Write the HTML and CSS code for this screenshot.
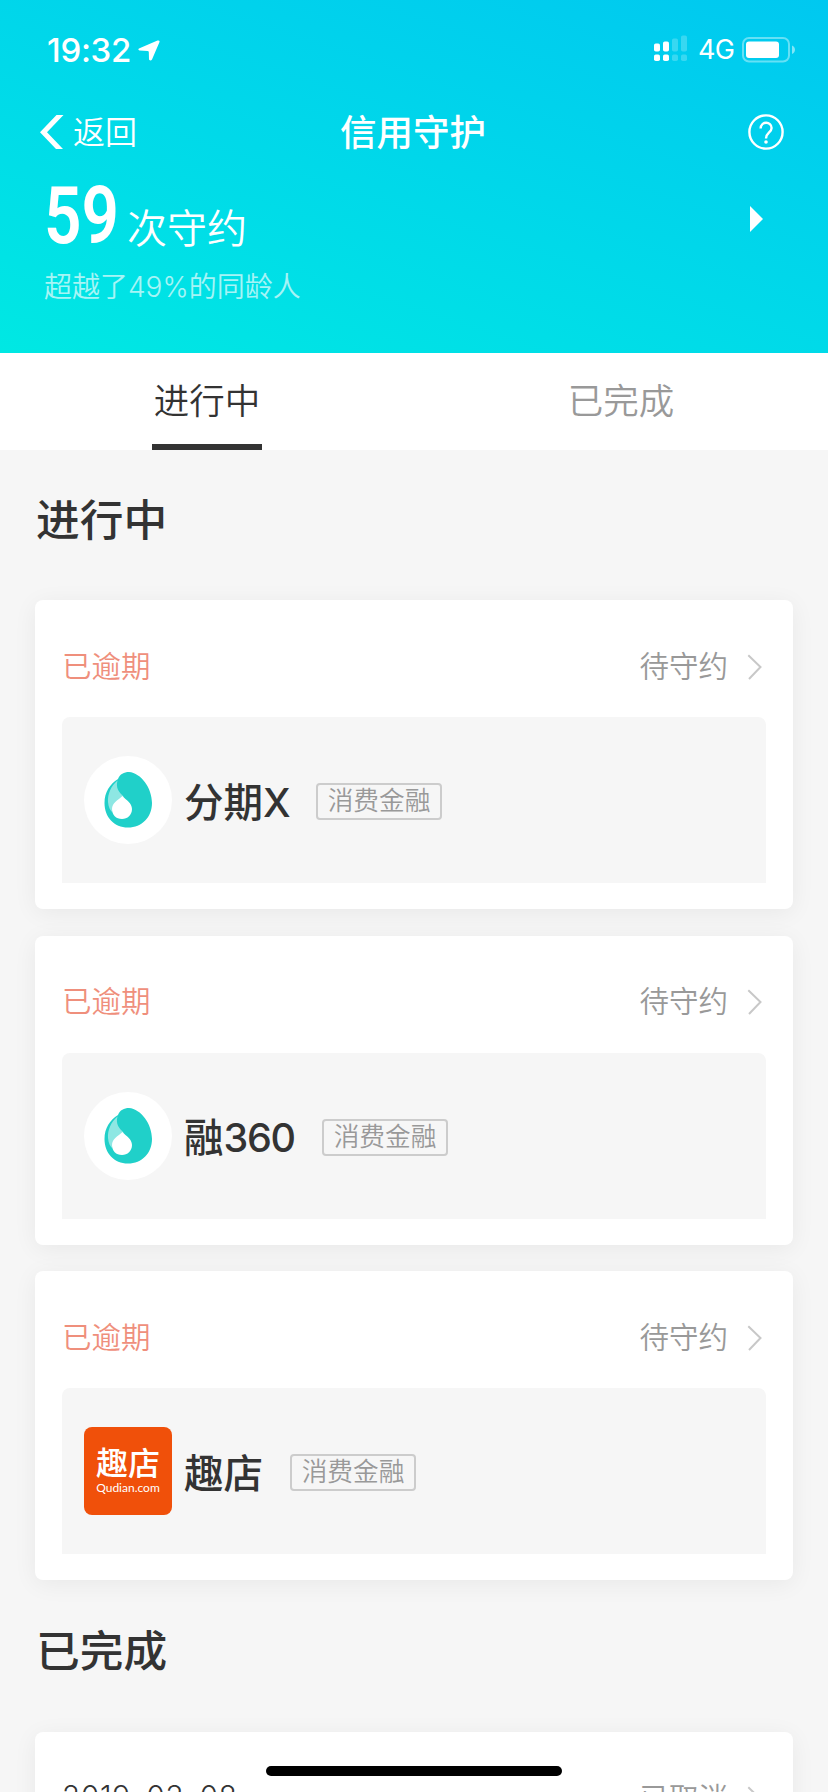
FILE: index.html
```html
<!DOCTYPE html>
<html lang="zh-CN">
<head>
<meta charset="utf-8">
<title>信用守护</title>
<link rel="stylesheet" href="styles.css">
</head>
<body>
<svg width="0" height="0" class="defs">
  <symbol id="chevron" viewBox="0 0 16 26"><path d="M1.3 1.3 13.5 13 2 25" fill="none" stroke="#c8c8c8" stroke-width="2"/></symbol>
  <symbol id="drop" viewBox="0 0 88 88">
    <circle cx="44" cy="44" r="44" fill="#fff"/>
    <path d="M34 23C36 18 40 16 45 16C57 17 68 32 68 47C68 61 58 71.500 44 71.500C30 71.500 20.500 61 20.500 47C20.500 36 26 28 34 23Z" fill="#20d0c9"/>
    <path d="M33.500 24.500C27 30 23.500 38 24 46C24.500 51 26 54 28 56C28 50 34 45 39.500 40.500C35 36 31.500 32 33.500 24.500Z" fill="#8ee7e3"/>
    <path d="M38.500 40C42 44 48 47 48 53C48 59 43.500 63 38 63C32 63 28 59 28 53C28 47 34 44 38.500 40Z" fill="#fff"/>
  </symbol>
</svg>
<div class="screen">
  <header class="header">
    <div class="statusbar">
      <div class="clock"><span>19:32</span>
        <svg class="location" width="22" height="21" viewBox="0 0 22 21"><path d="M1.500 8.300 19.500.5Q22 0 21.500 2L14 19.500Q12.500 21.500 11 19.500L10.800 12Q10.700 11 9.500 10.900L1.500 10.500Q-.8 9.500 1.500 8.300Z" fill="#fff"/></svg>
      </div>
      <div class="indicators">
        <svg class="signal" width="34" height="27" viewBox="0 0 34 27" fill="#fff">
          <rect x="0" y="8.500" width="6" height="8" rx="1.800"/><rect x="0" y="19.500" width="6" height="6.500" rx="1.800"/>
          <rect x="9" y="6.500" width="6" height="10" rx="1.800"/><rect x="9" y="19.500" width="6" height="6.500" rx="1.800"/>
          <g opacity=".22"><rect x="18" y="3.500" width="6" height="13" rx="1.800"/><rect x="18" y="19.500" width="6" height="6.500" rx="1.800"/>
          <rect x="27" y="0.500" width="6" height="16" rx="1.800"/><rect x="27" y="19.500" width="6" height="6.500" rx="1.800"/></g>
        </svg>
        <span class="network">4G</span>
        <svg width="54" height="26" viewBox="0 0 54 26"><rect x="1" y="1" width="46" height="23.500" rx="6" fill="none" stroke="#fff" stroke-opacity=".4" stroke-width="2"/><rect x="4" y="4.500" width="33" height="16.500" rx="3" fill="#fff"/><path d="M50 8.500C54 10 54 15.500 50 17Z" fill="#fff" fill-opacity=".5"/></svg>
      </div>
    </div>
    <nav class="navbar">
      <div class="back"><svg width="24" height="34" viewBox="0 0 24 34"><path d="M16.500 0H23.500L7 17.300 23 34H16L0 17.300Z" fill="#fff"/></svg><span>返回</span></div>
      <h1 class="title">信用守护</h1>
      <svg class="help" width="36" height="36" viewBox="0 0 36 36" fill="none" stroke="#fff" stroke-width="2.400"><circle cx="18" cy="18" r="16.600"/><path d="M12.600 14.500C12.600 7 23.600 7 23.600 14C23.600 18.500 18 18.500 18 24.500"/><circle cx="18" cy="28" r="1.800" fill="#fff" stroke="none"/></svg>
    </nav>
    <div class="summary">
      <div class="score"><span class="count">59</span><span class="unit">次守约</span></div>
      <svg class="more" width="13" height="26" viewBox="0 0 13 26"><path d="M0 0 13 13 0 26Z" fill="#fff"/></svg>
    </div>
    <p class="rank">超越了49%的同龄人</p>
  </header>
  <div class="tabs">
    <div class="tab active"><span>进行中</span></div>
    <div class="tab"><span>已完成</span></div>
  </div>
  <main class="content">
    <h2 class="section">进行中</h2>
    <div class="cards">
      <article class="card">
        <div class="card-head"><span class="overdue">已逾期</span><span class="state">待守约</span><svg class="chevron"><use href="#chevron"/></svg></div>
        <div class="panel"><svg class="logo"><use href="#drop"/></svg><span class="name name-fenqi">分期X</span><span class="tag">消费金融</span></div>
      </article>
      <article class="card">
        <div class="card-head"><span class="overdue">已逾期</span><span class="state">待守约</span><svg class="chevron"><use href="#chevron"/></svg></div>
        <div class="panel"><svg class="logo"><use href="#drop"/></svg><span class="name name-rong">融<span class="digits">360</span></span><span class="tag">消费金融</span></div>
      </article>
      <article class="card">
        <div class="card-head"><span class="overdue">已逾期</span><span class="state">待守约</span><svg class="chevron"><use href="#chevron"/></svg></div>
        <div class="panel"><div class="logo qudian"><span class="qd-name">趣店</span><span class="qd-url">Qudian.com</span></div><span class="name name-qudian">趣店</span><span class="tag">消费金融</span></div>
      </article>
    </div>
    <h2 class="section section-done">已完成</h2>
    <article class="card">
      <div class="card-head"><span class="date">2019–03–08</span><span class="state">已取消</span><svg class="chevron"><use href="#chevron"/></svg></div>
    </article>
  </main>
  <div class="home-indicator"></div>
</div>
</body>
</html>
```
FILE: styles.css
```css
* { box-sizing: border-box; }
body, h1, h2, p { margin: 0; }
.defs { display: none; }
svg { flex: none; display: block; }
.screen {
  position: relative;
  width: 828px;
  height: 1792px;
  overflow: hidden;
  background: #f6f6f6;
  color: #333;
  font-family: Inter, "Noto Sans CJK SC", sans-serif;
  white-space: nowrap;
}
.header {
  height: 353px;
  padding-top: 31px;
  color: #fff;
  background: linear-gradient(18deg, #00e8e3 0%, #00c8f0 100%);
}
.statusbar {
  height: 38px;
  padding: 0 32px 0 47px;
  display: flex;
  justify-content: space-between;
  align-items: center;
}
.clock { display: flex; align-items: center; gap: 7px; font-size: 33px; font-weight: 500; line-height: 36px; letter-spacing: -.3px; }
.indicators { display: flex; align-items: center; gap: 10px; }
.indicators .network { font-size: 27px; font-weight: 400; line-height: 36px; width: 34px; letter-spacing: -.8px; }
.signal { margin-top: -3px; }
.navbar {
  height: 84px;
  margin-top: 21px;
  padding: 0 44px 0 40px;
  display: grid;
  grid-template-columns: 1fr auto 1fr;
  align-items: center;
}
.back { display: flex; align-items: center; gap: 9px; font-size: 32px; font-weight: 350; line-height: 40px; }
.back span { padding-top: 1px; }
.title { font-size: 36.500px; font-weight: 500; line-height: 44px; padding: 1px 0 0 2px; }
.help { justify-self: end; }
.summary {
  display: flex;
  justify-content: space-between;
  align-items: center;
  height: 89px;
  padding: 0 65px 0 44px;
}
.score { display: flex; align-items: baseline; padding-bottom: 6px; }
.count { font: 600 80px/80px Roboto, sans-serif; width: 83px; transform: scaleX(.82); transform-origin: 0 50%; }
.unit { font-size: 40px; font-weight: 350; line-height: 50px; }
.rank { padding: 4px 0 0 44px; font-size: 28px; font-weight: 350; line-height: 40px; opacity: .65; }
.tabs { height: 97px; background: #fff; display: grid; grid-template-columns: 1fr 1fr; justify-items: center; }
.tab { width: 110px; padding-top: 24px; font-size: 35.500px; line-height: 50px; text-align: center; color: #999; font-weight: 350; }
.tab.active { color: #333; border-bottom: 6px solid #333; }
.content { padding: 0 35px; }
.section { height: 150px; padding: 39px 0 0 1px; font-size: 43.700px; line-height: 64px; font-weight: 500; }
.section-done { height: 152px; padding-top: 40px; }
.cards { display: grid; gap: 26.500px; }
.card { height: 309px; padding: 0 27px; border-radius: 8px; background: #fff; box-shadow: 0 4px 24px rgba(0,0,0,.06); }
.card-head { height: 117px; padding: 10px 3px 0 0; display: flex; align-items: center; font-size: 29.500px; font-weight: 350; }
.overdue { color: #ef8f7c; }
.state { margin-left: auto; color: #999; }
.chevron { width: 16px; height: 26px; margin: 6px 0 0 19px; }
.panel { height: 166px; padding-left: 22px; border-radius: 8px 8px 0 0; background: #f6f6f6; display: flex; align-items: center; }
.logo { width: 88px; height: 88px; }
.name { margin-left: 12px; padding-top: 5px; font-size: 39.500px; font-weight: 500; line-height: 50px; }
.digits { letter-spacing: -1.300px; }
.name-fenqi { width: 132px; }
.name-rong { width: 138px; }
.name-qudian { width: 106px; }
.tag { width: 126px; height: 37px; margin-top: 3px; border: 2px solid #ccc; border-radius: 4px; color: #999; font-size: 25.700px; font-weight: 350; line-height: 32px; text-align: center; }
.qudian { border-radius: 8px; background: #f0500a; color: #fff; display: flex; flex-direction: column; align-items: center; justify-content: center; }
.qd-name { font-size: 32px; line-height: 34px; font-weight: 500; }
.qd-url { font: 12px/14px Lato, sans-serif; }
.date { color: #333; letter-spacing: .8px; }
.home-indicator { position: absolute; left: 266px; top: 1766px; width: 296px; height: 10px; border-radius: 5px; background: #000; }
```
